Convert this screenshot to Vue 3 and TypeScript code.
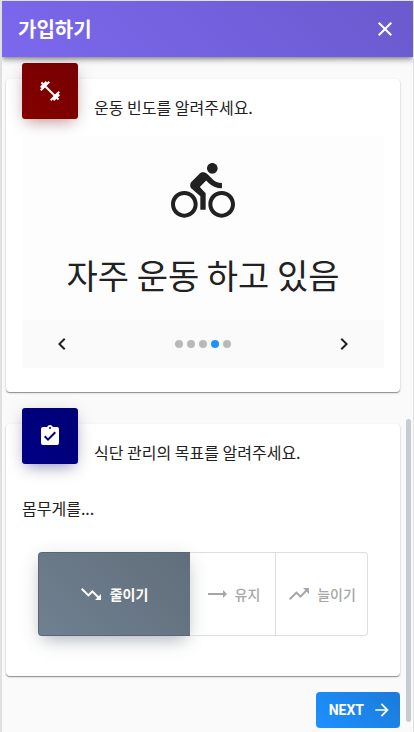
<script setup lang="ts">
import { ref } from 'vue'

interface Goal {
  label: string
  icon: string
  width: string
}

const goals: Goal[] = [
  {
    label: '줄이기',
    icon: 'M16,18L18.29,15.71L13.41,10.83L9.41,14.83L2,7.41L3.41,6L9.41,12L13.41,8L19.71,14.29L22,12V18H16Z',
    width: '152px',
  },
  { label: '유지', icon: 'M22,12L18,8V11H3V13H18V16L22,12Z', width: '86px' },
  {
    label: '늘이기',
    icon: 'M16,6L18.29,8.29L13.41,13.17L9.41,9.17L2,16.59L3.41,18L9.41,12L13.41,16L19.71,9.71L22,12V6H16Z',
    width: '92px',
  },
]

const selectedGoal = ref(0)
const slide = ref(3)
const slideCount = 5

function move(step: number): void {
  slide.value = (slide.value + step + slideCount) % slideCount
}
</script>

<template>
  <div class="dialog">
    <header class="toolbar">
      <h1 class="title">가입하기</h1>
      <button class="icon-button" aria-label="닫기">
        <svg viewBox="0 0 24 24"><path d="M19,6.41L17.59,5L12,10.59L6.41,5L5,6.41L10.59,12L5,17.59L6.41,19L12,13.41L17.59,19L19,17.59L13.41,12L19,6.41Z" /></svg>
      </button>
    </header>

    <main class="content">
      <section class="card exercise">
        <div class="card-head">
          <div class="badge maroon">
            <svg viewBox="0 0 24 24"><path d="M20.57,14.86L22,13.43L20.57,12L17,15.57L8.43,7L12,3.43L10.57,2L9.14,3.43L7.71,2L5.57,4.14L4.14,2.71L2.71,4.14L4.14,5.57L2,7.71L3.43,9.14L2,10.57L3.43,12L7,8.43L15.57,17L12,20.57L13.43,22L14.86,20.57L16.29,22L18.43,19.86L19.86,21.29L21.29,19.86L19.86,18.43L22,16.29L20.57,14.86Z" /></svg>
          </div>
          <p class="question">운동 빈도를 알려주세요.</p>
        </div>
        <div class="carousel">
          <div class="slide">
            <svg class="bike" viewBox="0 0 24 24"><path d="M15.5 5.5c1.1 0 2-.9 2-2s-.9-2-2-2-2 .9-2 2 .9 2 2 2zM5 12c-2.8 0-5 2.2-5 5s2.2 5 5 5 5-2.2 5-5-2.2-5-5-5zm0 8.5c-1.9 0-3.5-1.6-3.5-3.5s1.6-3.5 3.5-3.5 3.5 1.6 3.5 3.5-1.6 3.5-3.5 3.5zm5.8-10l2.4-2.4.8.8c1.3 1.3 3 2.1 5.1 2.1V9c-1.5 0-2.7-.6-3.6-1.5l-1.9-1.9c-.5-.4-1-.6-1.6-.6s-1.1.2-1.4.6L7.8 8.4c-.4.4-.6.9-.6 1.4 0 .6.2 1.1.6 1.4L11 14v5h2v-6.2l-2.2-2.3zM19 12c-2.8 0-5 2.2-5 5s2.2 5 5 5 5-2.2 5-5-2.2-5-5-5zm0 8.5c-1.9 0-3.5-1.6-3.5-3.5s1.6-3.5 3.5-3.5 3.5 1.6 3.5 3.5-1.6 3.5-3.5 3.5z" /></svg>
            <p class="answer">자주 운동 하고 있음</p>
          </div>
          <nav class="pager">
            <button class="icon-button" aria-label="이전" @click="move(-1)">
              <svg viewBox="0 0 24 24"><path d="M15.41,16.58L10.83,12L15.41,7.41L14,6L8,12L14,18L15.41,16.58Z" /></svg>
            </button>
            <div class="dots">
              <span v-for="n in slideCount" :key="n" class="dot" :class="{ active: n - 1 === slide }" />
            </div>
            <button class="icon-button" aria-label="다음" @click="move(1)">
              <svg viewBox="0 0 24 24"><path d="M8.59,16.58L13.17,12L8.59,7.41L10,6L16,12L10,18L8.59,16.58Z" /></svg>
            </button>
          </nav>
        </div>
      </section>

      <section class="card goal">
        <div class="card-head">
          <div class="badge navy">
            <svg viewBox="0 0 24 24"><path d="M10,17L6,13L7.41,11.58L10,14.17L16.59,7.58L18,9M12,3A1,1 0 0,1 13,4A1,1 0 0,1 12,5A1,1 0 0,1 11,4A1,1 0 0,1 12,3M19,3H14.82C14.4,1.84 13.3,1 12,1C10.7,1 9.6,1.84 9.18,3H5A2,2 0 0,0 3,5V19A2,2 0 0,0 5,21H19A2,2 0 0,0 21,19V5A2,2 0 0,0 19,3Z" /></svg>
          </div>
          <p class="question">식단 관리의 목표를 알려주세요.</p>
        </div>
        <p class="lead">몸무게를...</p>
        <div class="toggle">
          <button
            v-for="(goal, i) in goals"
            :key="goal.label"
            class="option"
            :class="{ selected: i === selectedGoal }"
            :style="{ width: goal.width }"
            @click="selectedGoal = i"
          >
            <svg viewBox="0 0 24 24"><path :d="goal.icon" /></svg>
            <span>{{ goal.label }}</span>
          </button>
        </div>
      </section>

      <div class="actions">
        <button class="next">
          <span>NEXT</span>
          <svg viewBox="0 0 24 24"><path d="M12 4l-1.41 1.41L16.17 11H4v2h12.17l-5.58 5.59L12 20l8-8z" /></svg>
        </button>
      </div>
      <div class="scrollbar" />
    </main>
  </div>
</template>

<style>
body {
  margin: 0;
  background: #fafafa;
  overflow: hidden;
}
</style>

<style scoped>
.dialog {
  display: flex;
  flex-direction: column;
  box-sizing: border-box;
  height: 732px;
  border: solid #e0e0e0;
  border-width: 1px 1px 0 2px;
  background: #fafafa;
  color: #212121;
  font-family: Roboto, 'Noto Sans CJK KR', sans-serif;
  overflow: hidden;
}

h1,
p {
  margin: 0;
}

button {
  padding: 0;
  border: 0;
  background: none;
  color: inherit;
  font: inherit;
}

svg {
  display: block;
  flex: none;
  width: 24px;
  height: 24px;
  fill: currentColor;
}

.toolbar {
  position: relative;
  z-index: 1;
  display: flex;
  flex: none;
  align-items: center;
  justify-content: space-between;
  box-sizing: border-box;
  height: 56px;
  padding: 0 16px;
  background: linear-gradient(45deg, #7b68ee, #6a5acd);
  box-shadow: 0 2px 4px -1px rgba(0, 0, 0, 0.35), 0 4px 5px rgba(0, 0, 0, 0.16), 0 1px 10px rgba(0, 0, 0, 0.1);
  color: #fff;
}

.title {
  font-family: 'Noto Sans CJK KR', sans-serif;
  font-size: 20px;
  font-weight: 700;
  line-height: 30px;
}

.content {
  position: relative;
  flex: 1;
  padding: 22px 13px 0 4px;
}

.card {
  box-sizing: border-box;
  padding: 0 16px;
  border-radius: 4px;
  background: #fff;
  box-shadow: 0 1px 1px rgba(0, 0, 0, 0.38), 0 1px 3px rgba(0, 0, 0, 0.12);
  font-family: 'Noto Sans CJK KR', sans-serif;
}

.exercise {
  height: 313px;
  margin-bottom: 32px;
}

.goal {
  height: 252px;
}

.card-head {
  display: flex;
  gap: 16px;
  height: 57px;
}

.badge {
  display: flex;
  align-items: center;
  justify-content: center;
  width: 56px;
  height: 56px;
  margin-top: -16px;
  border-radius: 3px;
  color: #fff;
}

.maroon {
  background: linear-gradient(45deg, #850000, #750000);
  box-shadow: 0 6px 14px -5px rgba(128, 0, 0, 0.4), 0 4px 20px rgba(0, 0, 0, 0.1);
}

.navy {
  background: linear-gradient(45deg, #000085, #000075);
  box-shadow: 0 6px 14px -5px rgba(0, 0, 128, 0.4), 0 4px 20px rgba(0, 0, 0, 0.1);
}

.question,
.lead {
  font-size: 16px;
  line-height: 24px;
}

.question {
  margin-top: 16px;
}

.carousel {
  display: flex;
  flex-direction: column;
}

.slide {
  display: flex;
  flex-direction: column;
  align-items: center;
  box-sizing: border-box;
  height: 184px;
  padding-top: 23px;
  background: #fdfdfd;
}

.bike {
  width: 64px;
  height: 64px;
}

.answer {
  margin-top: 32px;
  font-size: 34px;
  line-height: 40px;
}

.pager {
  display: flex;
  align-items: center;
  justify-content: space-between;
  height: 48px;
  padding: 0 28px;
  background: #fafafa;
}

.dots {
  display: flex;
  gap: 4px;
}

.dot {
  width: 8px;
  height: 8px;
  border-radius: 50%;
  background: #b9b9b9;
}

.dot.active {
  background: #1e90ff;
}

.lead {
  margin-top: 15px;
}

.toggle {
  display: flex;
  height: 84px;
  margin: 32px 16px 0;
}

.option {
  display: flex;
  align-items: center;
  justify-content: center;
  gap: 6px;
  box-sizing: border-box;
  border: 1px solid #dedede;
  border-left-width: 0;
  color: #a6a6a6;
  font-size: 14px;
  font-weight: 500;
}

.option:first-child {
  border-radius: 4px 0 0 4px;
}

.option:last-child {
  border-radius: 0 4px 4px 0;
}

.option.selected {
  gap: 7px;
  padding-right: 2px;
  border: 1px solid #586776;
  border-right-width: 0;
  background: linear-gradient(45deg, #708090, #616e7b);
  box-shadow: 0 8px 16px -6px rgba(112, 128, 144, 0.5), 0 4px 20px rgba(0, 0, 0, 0.1);
  color: #fff;
  font-weight: 700;
}

.actions {
  display: flex;
  justify-content: flex-end;
  margin-top: 16px;
}

.next {
  display: flex;
  align-items: center;
  gap: 8px;
  height: 36px;
  padding: 0 8px 0 13px;
  border-radius: 4px;
  background: linear-gradient(45deg, #1e90ff, #1a7bd9);
  color: #fff;
  font-size: 14px;
  font-weight: 700;
}

.next svg {
  width: 20px;
  height: 20px;
}

.scrollbar {
  position: absolute;
  top: 362px;
  right: 2px;
  width: 5px;
  height: 303px;
  border-radius: 3px;
  background: #c7ccd3;
}
</style>
